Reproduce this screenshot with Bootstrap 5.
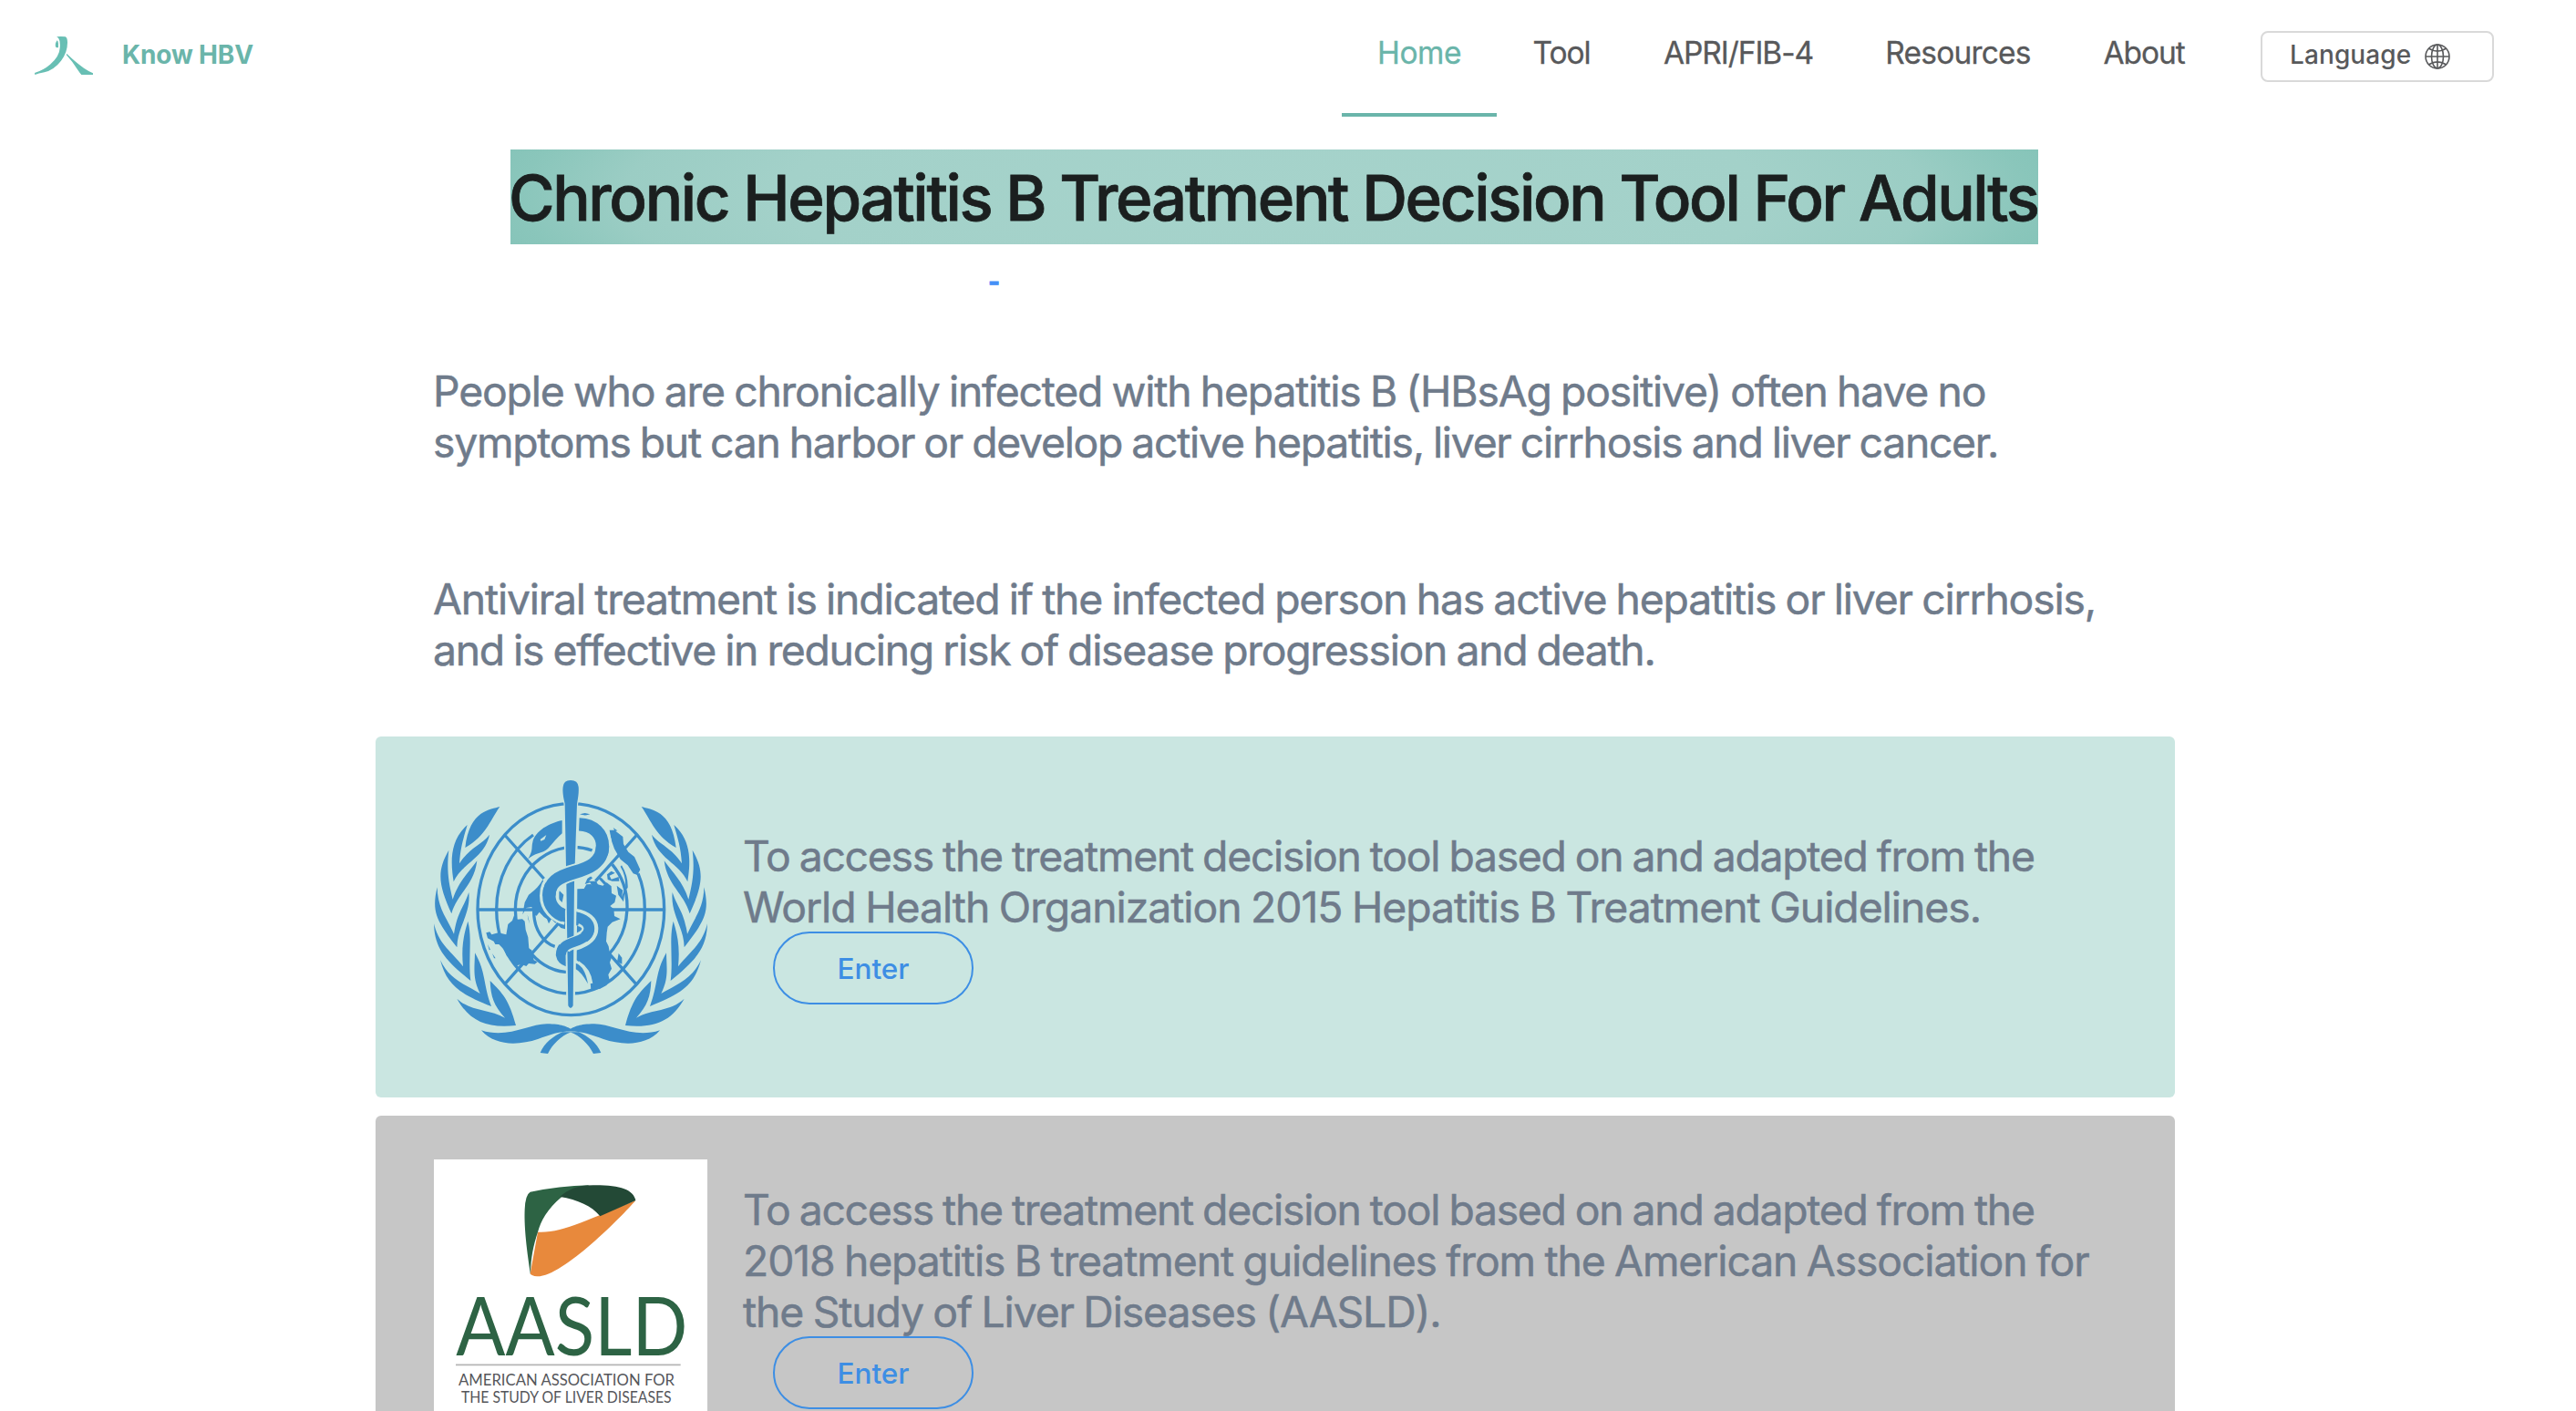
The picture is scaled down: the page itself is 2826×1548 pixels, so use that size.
<!DOCTYPE html>
<html lang="en">
<head>
<meta charset="utf-8">
<meta name="viewport" content="width=device-width, initial-scale=1">
<title>Know HBV</title>
<link href="https://cdn.jsdelivr.net/npm/bootstrap@5.3.0/dist/css/bootstrap.min.css" rel="stylesheet">
<style>
body{font-family:Inter,"Liberation Sans",sans-serif;background:#fff;color:#1b1f1f;height:1548px;overflow:hidden}
.site-bar{height:128px;padding:0 90px 0 38px}
.brand-link{gap:32px;padding-top:40px;color:#6ab5aa;text-decoration:none}
.brand-name{font-size:28px;font-weight:700;line-height:40px;letter-spacing:-.15px}
.brand-mark{width:64px;height:42px;display:block}
.top-links .nav-link{height:128px;padding:38px 0 0;font-size:33.5px;line-height:40px;letter-spacing:-1.08px;color:#58595b;text-align:center;-webkit-text-stroke:.3px}
.top-links .nav-link.active{color:#6ab5aa;border-bottom:4px solid #6ab5aa;letter-spacing:-.45px}
.top-links .w-res{letter-spacing:-.8px}
.w-home{width:170px}.w-tool{width:142px}.w-apri{width:246px}.w-res{width:236px}.w-about{width:172px}
.lang-btn{width:256px;height:56px;margin:34px 0 0 42px;padding:0 0 4px 30px;border:2px solid #d9d9d9;border-radius:8px;background:#fff;color:#58595b;font-size:28px;font-weight:500;line-height:36px;letter-spacing:.1px}
.lang-btn svg{width:28px;height:28px;margin:4px 0 0 15px}
.page-title{width:1676px;height:104px;margin:36px 0 0 560px;font-size:69px;font-weight:500;line-height:107px;letter-spacing:-2.37px;text-indent:-2px;white-space:nowrap;color:#1b1f1f;-webkit-text-stroke:.8px;background:radial-gradient(ellipse 52% 190% at center,#a6d3cb 0%,#a3d1c9 62%,#9bcdc4 82%,#8ac6bb 95%,#86c4b9 100%)}
.dash-link{display:block;margin:21px 0 0 1084px;height:43px;font-size:28px;font-weight:700;line-height:40px;color:#4490f7;-webkit-text-stroke:.8px;text-decoration:none}
.main-col{width:1974px;margin-left:412px}
.body-text{font-size:46.3px;line-height:56px;word-spacing:-1.5px;letter-spacing:-1.18px;color:#6f7b8b;-webkit-text-stroke:.5px;white-space:nowrap;margin:0}
.fit-a{letter-spacing:-1.28px}
.fit-b{letter-spacing:-1.02px}
.fit-c{letter-spacing:-1.1px}
.intro-block{padding:69px 0 0 63px}
.intro-block .body-text{margin-bottom:116px}
.intro-block .body-text:last-child{margin-bottom:67px}
.guide-panel{height:396px;border-radius:6px;padding:48px 64px}
.panel-who{background:#cae6e1;margin-bottom:20px}
.panel-aasld{background:#c6c6c6;height:324px;padding-bottom:0;border-radius:6px 6px 0 0}
.panel-pic{width:300px;height:300px;display:block}
.panel-aasld .panel-pic{height:276px}
.panel-copy{padding-left:39px}
.panel-who .panel-copy{padding-top:55px}
.panel-aasld .panel-copy{padding-top:27px}
.enter-btn{width:220px;height:80px;margin:-1px 0 0 33px;padding:0;border:2px solid #3d8ee4;border-radius:40px;color:#3d8ee4;font-size:31.5px;font-weight:500;line-height:77px;text-align:center}
</style>
<script src="https://cdn.jsdelivr.net/npm/bootstrap@5.3.0/dist/js/bootstrap.bundle.min.js"></script>
</head>
<body>
<header class="site-bar d-flex justify-content-between align-items-start">
  <a class="brand-link d-flex align-items-start" href="#">
    <svg class="brand-mark" viewBox="114 120 192 126" fill="#68bfb4"><path d="M186 121Q200 119 215 121Q222 124 222 140Q222 172 201 200Q179 229 146 238Q126 242 115 246L114 240Q144 230 165 212Q196 185 197 158Q199 135 193 127Q190 123 186 121Z"/><path d="M188 133Q191 134 192 143L192 156Q185 158 183 154Q180 143 188 133Z"/><path d="M220 177Q250 206 276 224Q294 236 306 241V246H268Q263 241 255 229Q241 205 218 180Z"/></svg>
    <span class="brand-name">Know HBV</span>
  </a>
  <div class="d-flex align-items-start">
    <nav class="nav top-links flex-nowrap">
      <a class="nav-link active w-home" href="#">Home</a>
      <a class="nav-link w-tool" href="#">Tool</a>
      <a class="nav-link w-apri" href="#">APRI/FIB-4</a>
      <a class="nav-link w-res" href="#">Resources</a>
      <a class="nav-link w-about" href="#">About</a>
    </nav>
    <button class="lang-btn d-flex align-items-center" type="button">Language
      <svg viewBox="0 0 28 28" fill="none" stroke="#58595b" stroke-width="1.6"><circle cx="14" cy="14" r="13"/><ellipse cx="14" cy="14" rx="6.5" ry="13"/><path d="M14 1V27M1 14H27M4.6 5.2Q14 11 23.4 5.2M4.6 22.8Q14 17 23.4 22.8"/></svg>
    </button>
  </div>
</header>
<main>
  <h1 class="page-title">Chronic Hepatitis B Treatment Decision Tool For Adults</h1>
  <a class="dash-link" href="#">-</a>
  <div class="main-col">
    <div class="intro-block">
      <p class="body-text">People who are chronically infected with hepatitis B (HBsAg positive) often have no<br><span class="fit-a">symptoms but can harbor or develop active hepatitis, liver cirrhosis and liver cancer.</span></p>
      <p class="body-text">Antiviral treatment is indicated if the infected person has active hepatitis or liver cirrhosis,<br><span class="fit-a">and is effective in reducing risk of disease progression and death.</span></p>
    </div>
    <section class="guide-panel panel-who d-flex align-items-start">
      <svg class="panel-pic flex-shrink-0" viewBox="228 198 900 900" fill="#3c8dca">
        <g fill="none" stroke="#3c8dca" stroke-width="10">
          <ellipse cx="679" cy="623" rx="307" ry="348"/>
          <path d="M555 378C480 430 434 520 434 623C434 776 543 900 679 900C813 900 922 776 922 623C922 580 915 540 900 505"/>
          <path d="M749 429C630 385 496 480 496 623C496 738 578 830 679 830M800 775C880 690 885 560 815 475"/>
          <path d="M557 630C557 690 590 735 626 745"/>
          <path d="M372 624H560M800 624H985M461 378L590 522M896 378L760 530M462 868L655 650M893 868L790 752"/>
        </g>
        <path d="M400 700L412 697L418 706L440 700L466 706L472 672L486 660L492 643L502 656L519 655L527 662L530 690L538 715L541 752L550 757L557 790L569 796L560 803L540 801L532 810L517 804L500 808L484 790L468 776L460 757L442 738L430 738L425 728L405 718Z"/>
        <path d="M405 738L414 756L410 757ZM420 768L431 784L426 784Z"/>
        <path d="M586 525C570 555 552 565 540 575L527 600L520 640L532 618L550 615L555 640L566 644L575 632L590 648L600 655L606 670L615 655L628 668L640 655L660 655V620L620 600L600 560ZM536 640L544 672L538 655Z"/>
        <path d="M640 560L655 575L650 600L640 590ZM630 668L660 660V688L646 684Z"/>
        <path d="M700 556L722 555L730 541L745 540L757 551L765 540L784 545L797 535L812 547L813 570L828 578L823 600L808 612L820 622L822 645L842 655L815 665L800 680L797 700L795 728L803 745L807 768L814 778L807 798L813 818L802 838L806 856L796 873L775 884L745 889L742 850L725 815L698 790Z"/>
        <path d="M725 540L733 522L744 514L750 520L738 530L762 530L770 545L755 556L742 535ZM764 515L780 520L800 540L790 544ZM800 525L798 508L812 497L824 503L806 512L812 524L836 516L838 530L815 530ZM846 478Q868 515 866 552L858 560Q862 515 842 482ZM830 545L850 560L846 582L858 550L852 598L835 575ZM836 768L847 782V803L831 795ZM806 362L822 362L850 384L852 408L868 434L888 450L907 492L898 510L884 505L866 478L842 458L822 424L812 395ZM818 354L832 364L824 366ZM708 310L725 306L742 310L725 314Z"/>
        <path d="M650 330C610 338 560 365 553 402C548 420 556 428 537 458C558 436 585 440 604 422C620 405 635 385 650 373Z"/>
        <path d="M578 393L598 378L592 393L580 398Z" fill="#cae6e1"/>
        <!-- serpent, lower coil first -->
        <g fill="none" stroke-linecap="butt">
          <path d="M698 804Q733 826 738 868" stroke="#cae6e1" stroke-width="26"/>
          <path d="M650 772Q652 783 665 792M690 647C730 655 742 670 742 687C742 712 715 724 690 732C662 741 650 750 649 776" stroke="#cae6e1" stroke-width="54"/>
          <path d="M704 343C755 345 783 375 783 415C783 470 735 488 690 501C635 517 607 535 607 578C607 612 632 636 664 644" stroke="#cae6e1" stroke-width="62"/>
          <path d="M648 640L708 657" stroke="#3c8dca" stroke-width="42"/>
          <path d="M690 647C728 655 739 670 739 687C739 708 715 722 690 730C662 739 648 748 647 772Q650 788 668 794" stroke="#3c8dca" stroke-width="35"/>
        </g>
        <path d="M695 800Q725 810 735 868Q712 828 695 820Z"/>
        <path d="M655 285H703L692 946H664Z" fill="#cae6e1"/>
        <path d="M653 220Q655 198 678 198Q702 198 704 220Q706 240 699 275L690 535L686 940Q678 956 670 940L664 535L659 275Q650 240 653 220Z" stroke="#cae6e1" stroke-width="7" paint-order="stroke"/>
        <g fill="none">
          <path d="M706 343C755 345 783 375 783 415C783 470 735 488 690 501C635 517 607 535 607 578C607 612 632 636 655 643" stroke="#3c8dca" stroke-width="43"/>
          <path d="M783 440C770 478 725 490 690 501C655 511 630 522 615 545" stroke="#cae6e1" stroke-width="54"/>
          <path d="M783 415C783 470 735 488 690 501C635 517 607 535 607 578" stroke="#3c8dca" stroke-width="43"/>
          <path d="M722 716C710 724 700 728 690 732C675 737 662 742 656 750" stroke="#cae6e1" stroke-width="42"/>
          <path d="M739 687C739 708 715 722 690 730C662 739 648 748 647 772" stroke="#3c8dca" stroke-width="32"/>
        </g>
        <g id="laurel">
          <path d="M445 285C415 295 345 295 331 420C400 380 410 335 445 285Z"/>
          <path d="M338 345C275 400 285 480 293 532C320 470 395 455 411 377C385 410 345 420 312 472C315 420 325 390 338 345Z"/>
          <path d="M277 428C235 500 245 545 286 637C305 570 360 545 370 463C340 505 310 530 290 590C275 530 270 490 277 428Z"/>
          <path d="M239 550C220 630 235 660 304 748C305 680 350 640 343 567C325 620 305 630 294 704C270 650 240 620 239 550Z"/>
          <path d="M228 670C230 750 265 790 349 858C340 790 355 720 340 662C325 710 318 750 324 811C285 760 245 740 228 670Z"/>
          <path d="M249 790C270 870 310 900 417 942C390 870 400 830 363 766C362 820 355 850 380 900C330 870 280 855 249 790Z"/>
          <path d="M304 917C345 990 400 1015 498 1005C475 920 455 900 413 858C415 910 425 940 462 980C410 950 350 960 304 917Z"/>
          <path d="M384 1021C430 1075 510 1070 570 1050C610 1035 650 1022 690 1024L678 1016C665 1010 650 1000 600 1000C540 1000 470 1050 384 1021Z"/>
          <path d="M651 1027C622 1040 592 1062 578 1095L603 1098C618 1068 645 1040 680 1027Z"/>
        </g>
        <use href="#laurel" transform="translate(1356 0) scale(-1 1)"/>
      </svg>
      <div class="panel-copy">
        <p class="body-text"><span class="fit-a">To access the treatment decision tool based on and adapted from the</span><br><span class="fit-b">World Health Organization 2015 Hepatitis B Treatment Guidelines.</span></p>
        <a class="btn enter-btn" href="#">Enter</a>
      </div>
    </section>
    <section class="guide-panel panel-aasld d-flex align-items-start">
      <svg class="panel-pic flex-shrink-0" viewBox="228 246 900 828">
        <path d="M228 246H1128V1074H228Z" fill="#fff"/>
        <path d="M570 485C650 490 740 440 892 381C850 430 650 635 567 631Q550 630 545 622Z" fill="#e8893c"/>
        <path d="M545 353Q640 334 740 331L648 370C600 410 580 450 570 485C555 530 547 570 546 624C530 520 525 460 527 410Q529 362 545 353Z" fill="#2d6344"/>
        <path d="M643 369C670 345 700 331 752 331C840 330 885 345 892 381L775 433C750 400 700 378 643 369Z" fill="#234936"/>
        <g fill="#2d6344" font-family="Lato,sans-serif" font-size="270"><text x="301" y="890" textLength="762" lengthAdjust="spacingAndGlyphs">AASLD</text></g>
        <path d="M300 922H1040" stroke="#b5b5b5" stroke-width="5"/>
        <g fill="#55565a" font-family="Lato,sans-serif" font-size="50"><text x="309" y="990" textLength="711" lengthAdjust="spacingAndGlyphs">AMERICAN ASSOCIATION FOR</text><text x="318" y="1046" textLength="692" lengthAdjust="spacingAndGlyphs">THE STUDY OF LIVER DISEASES</text></g>
      </svg>
      <div class="panel-copy">
        <p class="body-text"><span class="fit-a">To access the treatment decision tool based on and adapted from the</span><br><span class="fit-c">2018 hepatitis B treatment guidelines from the American Association for</span><br><span class="fit-c">the Study of Liver Diseases (AASLD).</span></p>
        <a class="btn enter-btn" href="#">Enter</a>
      </div>
    </section>
  </div>
</main>
</body>
</html>
